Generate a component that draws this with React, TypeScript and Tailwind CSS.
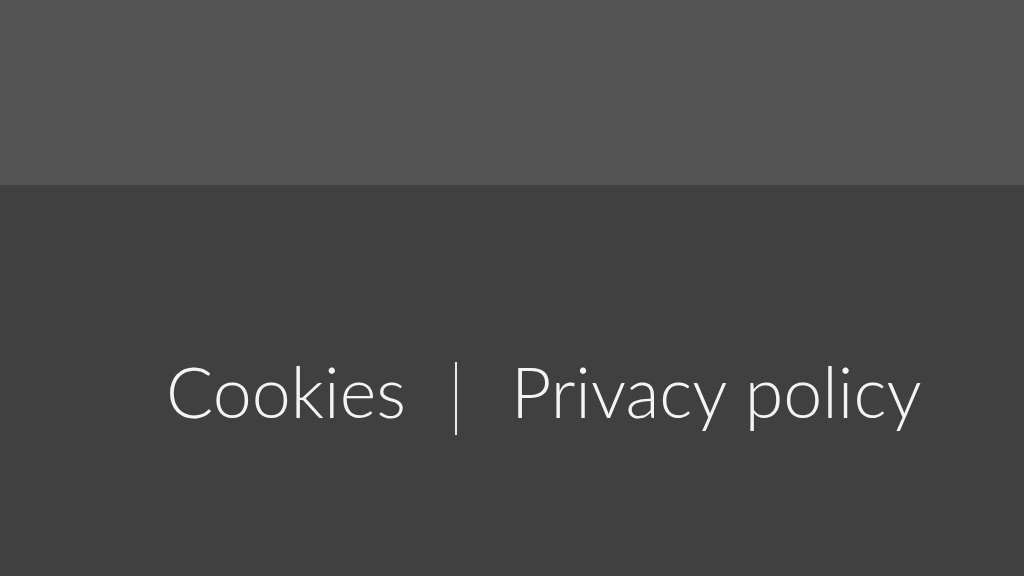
export default function App() {
  return (
    <div className="flex h-[576px] w-[1024px] flex-col overflow-hidden bg-[#404040]" style={{ fontFamily: '"Lato", "Open Sans", sans-serif' }}>
      <header className="h-[185px] shrink-0 bg-[#545454]" />
      <footer className="flex flex-1 items-start pl-[166px] pt-[171px]">
        <nav className="flex items-start text-[70px] font-light leading-none text-[#f4f4f4]">
          <a href="#">Cookies</a>
          <span className="ml-[49px] mr-[54px] mt-[6px] h-[73px] w-[2px] bg-[#e8e8e8]" />
          <a href="#">Privacy policy</a>
        </nav>
      </footer>
    </div>
  );
}
